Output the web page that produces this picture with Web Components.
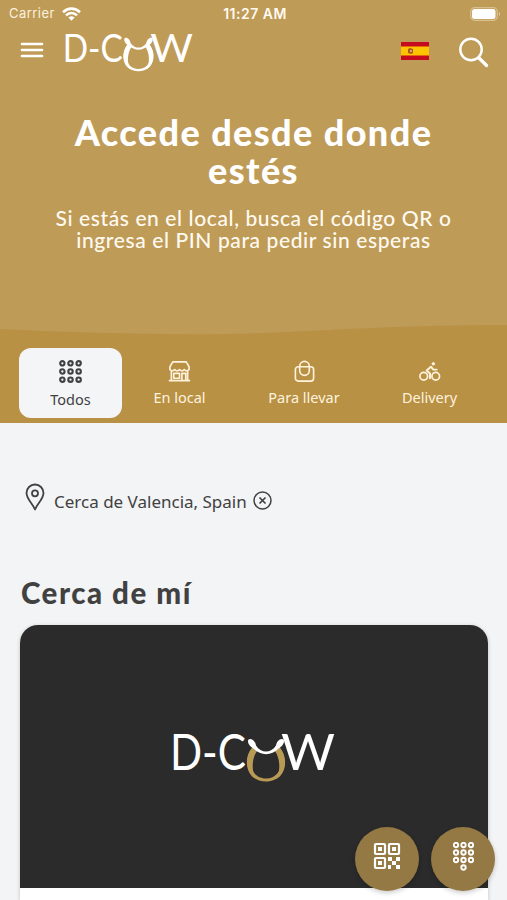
<!DOCTYPE html>
<html lang="es">
<head>
<meta charset="UTF-8">
<meta name="viewport" content="width=device-width, initial-scale=1">
<title>D-Cow</title>
<style>
    body {
        margin: 0;
        background: #f3f4f6;
        color: #414141;
        font-family: "Noto Sans", sans-serif;
    }
</style>
</head>
<body>
<dcow-app></dcow-app>

<script>
class DcowLogo extends HTMLElement {
    connectedCallback() {
        this.attachShadow({ mode: 'open' });
        this.shadowRoot.innerHTML = `
            <style>
                :host { display: block; color: white; }
                svg { display: block; width: 100%; overflow: visible; }
                text { font-family: Lato, sans-serif; font-size: 50px; fill: currentColor; }
                .ring { fill: var(--ring, white); }
            </style>
            <svg viewBox="0 0 162 50">
                <text x="-3" y="37" textLength="76" lengthAdjust="spacingAndGlyphs">D-C</text>
                <text x="108" y="37" textLength="54" lengthAdjust="spacingAndGlyphs">W</text>
                <path class="ring" d="M82 12C70 20 71 48.500 93 48.500S116 20 104 12l-1 5c9 9 6 28.500-10 28.500S74 26 83 17z"/>
                <path class="ring" d="M82 13C71 20 71 40 83 46 78 38 79 25 84 18zM104 13c11 7 11 27-1 33 5-8 4-21-1-28z"/>
                <path fill="currentColor" d="M75.500 6.500c3-2 7 2 7.500 6 5 8 15 8 20 0 .500-4 4.500-8 7.500-6 2 3-2 8-5 9-7 7.500-18 7.500-25 0-3-1-7-6-5-9z"/>
            </svg>
        `;
    }
}
customElements.define('dcow-logo', DcowLogo);

class DcowStatusBar extends HTMLElement {
    connectedCallback() {
        this.attachShadow({ mode: 'open' });
        this.shadowRoot.innerHTML = `
            <style>
                :host {
                    display: grid;
                    grid-template-columns: 1fr auto 1fr;
                    align-items: center;
                    height: 27px;
                    padding: 0 6px 0 9px;
                    color: #fffaf0;
                    font: 13px/27px Inter, sans-serif;
                }
                .carrier { display: flex; align-items: center; gap: 7px; letter-spacing: 0.45px; color: #fbf1de; }
                .time { font-size: 14px; font-weight: 600; letter-spacing: 0.5px; }
                .battery { justify-self: end; }
                svg { display: block; }
            </style>
            <div class="carrier">
                <span>Carrier</span>
                <svg width="19" height="14" viewBox="0 0 19 14" fill="none" stroke="white" stroke-width="2.6">
                    <path d="M1 5.2C6 .4 13 .4 18 5.2M4 8.4c3.3-3 7.700-3 11 0"/>
                    <path d="M6.400 10.600q3.100-2.500 6.200 0L9.500 13.800z" fill="white" stroke="none"/>
                </svg>
            </div>
            <span class="time">11:27 AM</span>
            <svg class="battery" width="31" height="14" viewBox="0 0 31 14">
                <rect x=".7" y=".7" width="26.600" height="12.600" rx="4" fill="none" stroke="#d9c18f" stroke-width="1.300"/>
                <rect x="2" y="2" width="23.500" height="10" rx="2.500" fill="white"/>
                <path d="M29 5q2 2 0 4z" fill="#e3cfa5"/>
            </svg>
        `;
    }
}
customElements.define('dcow-status-bar', DcowStatusBar);

class DcowNavbar extends HTMLElement {
    connectedCallback() {
        this.attachShadow({ mode: 'open' });
        this.shadowRoot.innerHTML = `
            <style>
                :host {
                    display: flex;
                    align-items: flex-start;
                    height: 55px;
                    padding: 6px 18px 0 20px;
                }
                svg { display: block; }
                .menu { margin-top: 8px; }
                dcow-logo { width: 128px; margin-left: 21px; }
                .flag { margin: 9px 30px 0 auto; }
                .search { margin-top: 4px; }
            </style>
            <svg class="menu" width="24" height="18" viewBox="0 0 24 18" stroke="white" stroke-width="2.700" stroke-linecap="round">
                <path d="M2 3h20M2 9h20M2 15h20"/>
            </svg>
            <dcow-logo></dcow-logo>
            <svg class="flag" width="28" height="18" viewBox="0 0 28 18">
                <path fill="#c60b1e" d="M0 0h28v18H0z"/>
                <path fill="#ffc400" d="M0 4.500h28v9H0z"/>
                <path fill="#ad5b19" d="M7 7l2-1 3 1v4l-2 1-3-1z"/>
                <path fill="#d8a08a" d="M9 8h2v2H9z"/>
            </svg>
            <svg class="search" width="30" height="31" viewBox="0 0 30 31" fill="none" stroke="white" stroke-linecap="round">
                <circle cx="12" cy="12.500" r="10.700" stroke-width="2.400"/>
                <path d="M20 21l7.500 7.500" stroke-width="3.200"/>
            </svg>
        `;
    }
}
customElements.define('dcow-navbar', DcowNavbar);

const TAB_ICONS = {
    grid: `<g stroke-width="2.200">${[3.5, 12, 20.5].map(y => [3.5, 12, 20.5].map(x => `<circle cx="${x}" cy="${y}" r="2.300"/>`).join('')).join('')}</g>`,
    store: `<path stroke-width="1.700" d="M5 2h14l3 5v3q-2.500 3-5 0-2.500 3-5 0-2.500 3-5 0-2.500 3-5 0V7zM3.500 12v9M20.500 12v9M1.500 21.500h21M6 14h6v5H6zM14.500 21v-7h4v7"/>`,
    bag: `<rect x="2.500" y="7" width="19" height="15" rx="3" stroke-width="1.700"/><path stroke-width="1.700" d="M7 11V6.500a5 5 0 0 1 10 0V11a5 5 0 0 1-10 0z"/>`,
    bike: `<circle cx="6" cy="17" r="4" stroke-width="1.800"/><circle cx="18.500" cy="17" r="4" stroke-width="1.800"/><circle cx="16" cy="4" r="1.300" fill="currentColor" stroke-width="1"/><path stroke-width="2" d="M12.500 19v-5L9 11l4.500-4L16 10h3.500"/>`
};

class DcowTab extends HTMLElement {
    connectedCallback() {
        this.attachShadow({ mode: 'open' });
        this.shadowRoot.innerHTML = `
            <style>
                :host {
                    display: flex;
                    flex-direction: column;
                    align-items: center;
                    box-sizing: border-box;
                    height: 70px;
                    padding-top: 12px;
                    border-radius: 12px;
                    color: #fff3dd;
                    font-size: 14.5px;
                    line-height: 20px;
                }
                :host([active]) {
                    background: #f3f5f7;
                    color: #414141;
                }
                svg { display: block; width: 23px; height: 23px; margin-bottom: 4px; }
                :host([active]) svg { margin-bottom: 6px; }
            </style>
            <svg viewBox="0 0 24 24" fill="none" stroke="currentColor" stroke-linejoin="round" stroke-linecap="round">${TAB_ICONS[this.getAttribute('icon')]}</svg>
            <slot></slot>
        `;
    }
}
customElements.define('dcow-tab', DcowTab);

class DcowHero extends HTMLElement {
    connectedCallback() {
        this.attachShadow({ mode: 'open' });
        this.shadowRoot.innerHTML = `
            <style>
                :host {
                    display: flex;
                    flex-direction: column;
                    height: 423px;
                    color: white;
                    background: #bf9b58;
                }
                .intro { flex: 1; padding-top: 25px; text-align: center; white-space: nowrap; }
                h1 {
                    margin: 0;
                    font: 900 36px/38px Lato, sans-serif;
                    letter-spacing: 1.4px;
                }
                p {
                    margin: 18px 0 0;
                    font: 500 21px/22px Lato, sans-serif;
                    letter-spacing: 0.6px;
                    color: #fffaf0;
                }
                .wave { display: block; width: 100%; height: 10px; }
                .tabs {
                    display: grid;
                    grid-template-columns: 103px 115px 134px 117px;
                    height: 88px;
                    box-sizing: border-box;
                    padding: 13px 19px 0;
                    background: #b89145;
                }
            </style>
            <dcow-status-bar></dcow-status-bar>
            <dcow-navbar></dcow-navbar>
            <div class="intro">
                <h1>Accede desde donde<br>estés</h1>
                <p>Si estás en el local, busca el código QR o<br>ingresa el PIN para pedir sin esperas</p>
            </div>
            <svg class="wave" viewBox="0 0 507 10" preserveAspectRatio="none">
                <path fill="#b89145" d="M0 4Q100 9 190 9.300C300 9.300 360 0 507 0v10H0z"/>
            </svg>
            <div class="tabs">
                <dcow-tab icon="grid" active>Todos</dcow-tab>
                <dcow-tab icon="store">En local</dcow-tab>
                <dcow-tab icon="bag">Para llevar</dcow-tab>
                <dcow-tab icon="bike">Delivery</dcow-tab>
            </div>
        `;
    }
}
customElements.define('dcow-hero', DcowHero);

class DcowLocation extends HTMLElement {
    connectedCallback() {
        this.attachShadow({ mode: 'open' });
        this.shadowRoot.innerHTML = `
            <style>
                :host {
                    display: flex;
                    align-items: flex-start;
                    height: 30px;
                    padding: 60px 0 0 25px;
                    font-size: 17px;
                    line-height: 24px;
                    white-space: nowrap;
                }
                svg { display: block; }
                .text { margin: 7px 6px 0 9px; }
                .clear { margin-top: 8px; }
            </style>
            <svg width="20" height="29" viewBox="0 0 20 29" fill="none" stroke="#414141" stroke-width="1.800" stroke-linejoin="round">
                <path d="M10 26.500C8 21 1.500 16 1.500 10a8.500 8.500 0 0 1 17 0C18.500 16 12 21 10 26.500z"/>
                <circle cx="10" cy="10.300" r="3"/>
            </svg>
            <span class="text"><slot></slot></span>
            <svg class="clear" width="19" height="19" viewBox="0 0 19 19" fill="none" stroke="#414141" stroke-width="1.500">
                <circle cx="9.500" cy="9.500" r="8.500"/>
                <path d="M6.500 6.500l6 6M12.500 6.500l-6 6" stroke-width="1.700"/>
            </svg>
        `;
    }
}
customElements.define('dcow-location', DcowLocation);

class DcowCard extends HTMLElement {
    connectedCallback() {
        this.attachShadow({ mode: 'open' });
        this.shadowRoot.innerHTML = `
            <style>
                :host {
                    display: block;
                    height: 275px;
                    margin: 0 19px 0 20px;
                    overflow: hidden;
                    border-radius: 18px 18px 0 0;
                    background: white;
                    box-shadow: 0 1px 4px rgba(0,0,0,0.2);
                }
                .cover {
                    display: flex;
                    justify-content: center;
                    height: 263px;
                    background: #2b2b2b;
                }
                dcow-logo { width: 162px; margin: 108px 0 0 0; --ring: #b99a55; }
            </style>
            <div class="cover"><dcow-logo></dcow-logo></div>
        `;
    }
}
customElements.define('dcow-card', DcowCard);

class DcowFab extends HTMLElement {
    connectedCallback() {
        const dots = [3, 10.500, 18].map(y => [3, 10.500, 18].map(x => `<circle cx="${x}" cy="${y}" r="2.200"/>`).join('')).join('');
        const icons = {
            qr: `<svg width="28" height="28" viewBox="0 0 28 28" fill="none" stroke="white" stroke-width="2.200">
                <rect x="2" y="2" width="10" height="10" rx="1"/><rect x="16" y="2" width="10" height="10" rx="1"/><rect x="2" y="16" width="10" height="10" rx="1"/>
                <path fill="white" stroke="none" d="M5 5h4v4H5zM19 5h4v4h-4zM5 19h4v4H5zM15 15h4v4h-4zM23 15h4v4h-4zM19 19h4v4h-4zM15 23h3v4h-3zM23 23h4v4h-4z"/>
            </svg>`,
            pin: `<svg width="21" height="29" viewBox="0 0 21 29" fill="none" stroke="white" stroke-width="1.900">${dots}<circle cx="10.500" cy="25.500" r="2.200"/></svg>`
        };
        this.attachShadow({ mode: 'open' });
        this.shadowRoot.innerHTML = `
            <style>
                :host {
                    display: flex;
                    align-items: center;
                    justify-content: center;
                    width: 64px;
                    height: 64px;
                    box-sizing: border-box;
                    padding-bottom: 6px;
                    border-radius: 50%;
                    background: #957944;
                    box-shadow: 0 2px 5px rgba(0,0,0,0.2);
                }
            </style>
            ${icons[this.getAttribute('icon')]}
        `;
    }
}
customElements.define('dcow-fab', DcowFab);

class DcowApp extends HTMLElement {
    connectedCallback() {
        this.attachShadow({ mode: 'open' });
        this.shadowRoot.innerHTML = `
            <style>
                :host {
                    display: block;
                    position: relative;
                    height: 900px;
                    overflow: hidden;
                }
                h2 {
                    margin: 61px 0 0 21px;
                    padding-bottom: 13px;
                    font: 900 29.5px/38px Lato, sans-serif;
                    letter-spacing: 1.500px;
                }
                .actions {
                    position: absolute;
                    right: 12px;
                    bottom: 9px;
                    display: flex;
                    gap: 12px;
                }
            </style>
            <dcow-hero></dcow-hero>
            <dcow-location>Cerca de Valencia, Spain</dcow-location>
            <h2>Cerca de mí</h2>
            <dcow-card></dcow-card>
            <div class="actions">
                <dcow-fab icon="qr"></dcow-fab>
                <dcow-fab icon="pin"></dcow-fab>
            </div>
        `;
    }
}
customElements.define('dcow-app', DcowApp);
</script>
</body>
</html>
